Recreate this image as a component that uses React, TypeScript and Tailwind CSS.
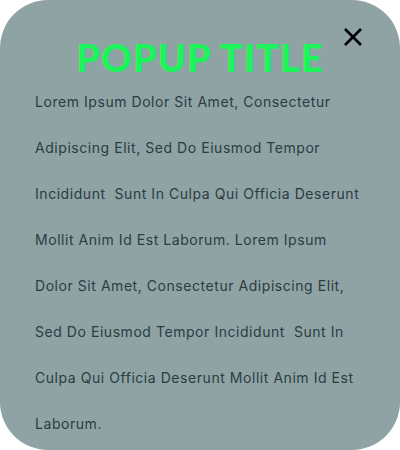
export default function App() {
  const lines = [
    "Lorem Ipsum Dolor Sit Amet, Consectetur",
    "Adipiscing Elit, Sed Do Eiusmod Tempor",
    "Incididunt  Sunt In Culpa Qui Officia Deserunt",
    "Mollit Anim Id Est Laborum. Lorem Ipsum",
    "Dolor Sit Amet, Consectetur Adipiscing Elit,",
    "Sed Do Eiusmod Tempor Incididunt  Sunt In",
    "Culpa Qui Officia Deserunt Mollit Anim Id Est",
    "Laborum.",
  ];
  return (
    <div className="w-[400px] h-[450px] bg-white">
      <div className="relative w-[400px] h-[450px] rounded-[48px] bg-[#8fa3a5] pt-[36px] px-[35px]">
        <button className="absolute left-[342px] top-[26px] w-[22px] h-[22px] flex items-center justify-center">
          <svg width="22" height="22" viewBox="0 0 22 22">
            <path d="M3 3 L19 19 M19 3 L3 19" stroke="#000" strokeWidth="2.6" fill="none" />
          </svg>
        </button>
        <h1
          className="text-center text-[38px] leading-[42px] font-black tracking-[1px] text-[#1cf559]"
          style={{ fontFamily: "Lato, sans-serif" }}
        >
          POPUP TITLE
        </h1>
        <div
          className="mt-[1px] text-[14px] leading-[46px] text-[#2a3c42] tracking-[0.55px] whitespace-pre"
          style={{ fontFamily: "Inter, sans-serif" }}
        >
          {lines.map((l, i) => (
            <div key={i}>{l}</div>
          ))}
        </div>
      </div>
    </div>
  );
}
